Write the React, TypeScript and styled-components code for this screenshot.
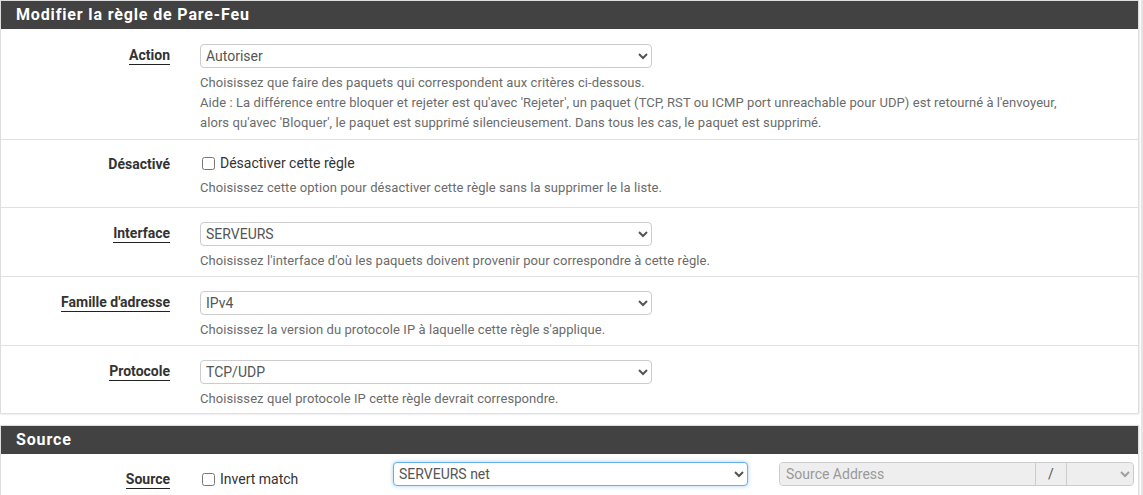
import styled, { createGlobalStyle, css } from "styled-components";

const GlobalStyle = createGlobalStyle`
  html, body {
    margin: 0;
    padding: 0;
    background: #fff;
    font-family: Roboto, "Liberation Sans", Arial, sans-serif;
    color: #333;
  }
`

const Page = styled.div`
  width: 1143px;
  height: 495px;
  overflow: hidden;
  border-right: 2px solid #e4e4e4;
  box-sizing: border-box;
`

const Panel = styled.section`
  width: 1139px;
  border: 1px solid #ddd;
  border-bottom: none;
  box-shadow: 0 1px 2px rgba(0, 0, 0, 0.18);
  background: #fff;
  margin-bottom: 12px;
  box-sizing: border-box;
`

const PanelHeader = styled.h2`
  margin: 0;
  height: 28px;
  line-height: 28px;
  padding: 0 15px;
  background: #424242;
  color: #fff;
  font-size: 16px;
  font-weight: 700;
  letter-spacing: 0.85px;
`

const Row = styled.div<{ $top?: number; $bottom?: number }>`
  display: grid;
  grid-template-columns: 169px 1fr;
  column-gap: 30px;
  padding: ${(p) => p.$top ?? 14}px 0 ${(p) => p.$bottom ?? 5}px;
  & + & {
    border-top: 1px solid #e0e0e0;
  }
`

const Label = styled.div<{ $offset?: number }>`
  text-align: right;
  font-size: 14px;
  font-weight: 700;
  line-height: 20px;
  color: #333;
  margin-top: ${(p) => p.$offset ?? 1}px;
`

const Required = styled.span`
  border-bottom: 1px solid #222;
  padding-bottom: 1px;
`

const Control = styled.div`
  display: flex;
  flex-direction: column;
  align-items: flex-start;
`

const Select = styled.select<{ $width?: number; $focus?: boolean }>`
  width: ${(p) => p.$width ?? 452}px;
  height: 24px;
  padding: 0 1px;
  border: 1px solid #ccc;
  border-radius: 4px;
  background: #fff;
  color: #555;
  font-family: Roboto, "Liberation Sans", Arial, sans-serif;
  font-size: 14px;
  box-sizing: border-box;
  ${(p) =>
    p.$focus &&
    css`
      border-color: #66afe9;
      box-shadow: 0 0 4px rgba(102, 175, 233, 0.6);
    `}
`

const Help = styled.div<{ $gap?: number }>`
  margin-top: ${(p) => p.$gap ?? 5}px;
  font-size: 13px;
  line-height: 20px;
  letter-spacing: 0.08px;
  color: #6b6b6b;
`

const CheckLine = styled.label<{ $offset?: number }>`
  display: flex;
  align-items: center;
  gap: 5px;
  height: 18px;
  margin-top: ${(p) => p.$offset ?? 0}px;
  font-size: 14px;
  color: #333;
`

const Check = styled.input`
  width: 13px;
  height: 13px;
  margin: 0 0 0 2px;
`

const SourceControls = styled.div`
  display: grid;
  grid-template-columns: 162px 355px 355px;
  column-gap: 31px;
  align-items: start;
`

const AddressGroup = styled.div`
  display: flex;
  height: 24px;
  border: 1px solid #ccc;
  border-radius: 4px;
  background: #eee;
  overflow: hidden;
  box-sizing: border-box;
`

const AddressInput = styled.input`
  flex: 1;
  min-width: 0;
  border: none;
  background: #eee;
  padding: 0 6px;
  font-family: Roboto, "Liberation Sans", Arial, sans-serif;
  font-size: 14px;
  &::placeholder {
    color: #999;
  }
`

const Addon = styled.span`
  width: 30px;
  border-left: 1px solid #ccc;
  border-right: 1px solid #ccc;
  display: flex;
  align-items: center;
  justify-content: center;
  font-size: 14px;
  color: #555;
`

const MaskSelect = styled.select`
  width: 66px;
  border: none;
  background: #eee;
  font-size: 14px;
`

const App = () => {
  return (
    <Page>
      <GlobalStyle />
      <Panel>
        <PanelHeader>Modifier la règle de Pare-Feu</PanelHeader>

        <Row $top={15} $bottom={6}>
          <Label><Required>Action</Required></Label>
          <Control>
            <Select defaultValue="pass">
              <option value="pass">Autoriser</option>
              <option value="block">Bloquer</option>
              <option value="reject">Rejeter</option>
            </Select>
            <Help>
              Choisissez que faire des paquets qui correspondent aux critères ci-dessous.<br />
              Aide : La différence entre bloquer et rejeter est qu'avec 'Rejeter', un paquet (TCP, RST ou ICMP port unreachable pour UDP) est retourné à l'envoyeur,<br />
              alors qu'avec 'Bloquer', le paquet est supprimé silencieusement. Dans tous les cas, le paquet est supprimé.
            </Help>
          </Control>
        </Row>

        <Row $bottom={9}>
          <Label $offset={0}>Désactivé</Label>
          <Control>
            <CheckLine>
              <Check type="checkbox" />
              Désactiver cette règle
            </CheckLine>
            <Help $gap={6}>
              Choisissez cette option pour désactiver cette règle sans la supprimer le la liste.
            </Help>
          </Control>
        </Row>

        <Row>
          <Label><Required>Interface</Required></Label>
          <Control>
            <Select defaultValue="srv">
              <option value="srv">SERVEURS</option>
            </Select>
            <Help>Choisissez l'interface d'où les paquets doivent provenir pour correspondre à cette règle.</Help>
          </Control>
        </Row>

        <Row>
          <Label><Required>Famille d'adresse</Required></Label>
          <Control>
            <Select defaultValue="inet">
              <option value="inet">IPv4</option>
            </Select>
            <Help>Choisissez la version du protocole IP à laquelle cette règle s'applique.</Help>
          </Control>
        </Row>

        <Row $bottom={4}>
          <Label><Required>Protocole</Required></Label>
          <Control>
            <Select defaultValue="tcpudp">
              <option value="tcpudp">TCP/UDP</option>
            </Select>
            <Help>Choisissez quel protocole IP cette règle devrait correspondre.</Help>
          </Control>
        </Row>
      </Panel>

      <Panel>
        <PanelHeader>Source</PanelHeader>
        <Row $top={8} $bottom={10}>
          <Label $offset={7}><Required>Source</Required></Label>
          <SourceControls>
            <CheckLine $offset={8}>
              <Check type="checkbox" />
              Invert match
            </CheckLine>
            <Select $width={355} $focus defaultValue="srvnet">
              <option value="srvnet">SERVEURS net</option>
            </Select>
            <AddressGroup>
              <AddressInput disabled placeholder="Source Address" />
              <Addon>/</Addon>
              <MaskSelect disabled />
            </AddressGroup>
          </SourceControls>
        </Row>
      </Panel>
    </Page>
  );
};

export default App;
